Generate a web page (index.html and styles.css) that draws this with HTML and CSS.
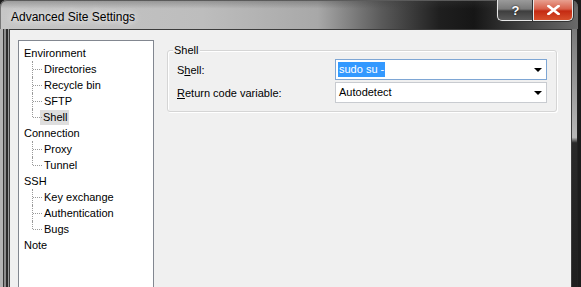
FILE: index.html
```html
<!DOCTYPE html>
<html lang="en">
<head>
	<link rel="stylesheet" href="styles.css">
	<meta charset="UTF-8">
	<title>Advanced Site Settings</title>
</head>
<body>
	<div class="window">
		<div class="titlebar">
			<span class="title">Advanced Site Settings</span>
			<div class="caption">
				<div class="btn help">?</div>
				<div class="btn close">
					<svg width="13" height="10" viewBox="0 0 13 10"><path d="M1.5 1 L11.5 9 M11.5 1 L1.5 9" stroke="#fff" stroke-width="2.6" stroke-linecap="square"/></svg>
				</div>
			</div>
		</div>
		<div class="body">
			<div class="client">
				<ul class="tree">
					<li>Environment
						<ul class="branch">
							<li>Directories</li>
							<li>Recycle bin</li>
							<li>SFTP</li>
							<li><span class="sel">Shell</span></li>
						</ul>
					</li>
					<li>Connection
						<ul class="branch">
							<li>Proxy</li>
							<li>Tunnel</li>
						</ul>
					</li>
					<li>SSH
						<ul class="branch">
							<li>Key exchange</li>
							<li>Authentication</li>
							<li>Bugs</li>
						</ul>
					</li>
					<li>Note</li>
				</ul>
				<div class="page">
					<div class="group">
						<div class="legend">Shell</div>
						<div class="row">
							<label>S<u>h</u>ell:</label>
							<div class="combo focus"><span class="hl">sudo su -</span><i class="arrow"></i></div>
						</div>
						<div class="row">
							<label><u>R</u>eturn code variable:</label>
							<div class="combo"><span>Autodetect</span><i class="arrow"></i></div>
						</div>
					</div>
				</div>
			</div>
			<div class="edge"></div>
		</div>
	</div>
</body>
</html>
```

FILE: styles.css
```css
html, body {
	margin: 0;
	padding: 0;
	width: 581px;
	height: 287px;
	overflow: hidden;
	background: #1c1c1c;
	font-family: "Liberation Sans", Arial, sans-serif;
	font-size: 11px;
	color: #000;
}
.window {
	width: 578px;
	height: 300px;
	display: flex;
	flex-direction: column;
	border-radius: 7px 7px 0 0;
	background-image: linear-gradient(to right, #c6c6c6 0%, #bdbdbd 35%, #a8a8a8 55%, #5a5a5a 66%, #1f1f1f 76%, #161616 82%, #3e3e3e 90%, #6a6a6a 100%);
	box-shadow: inset 0 1px 0 #6a6a6a, inset 1px 0 0 #777;
}
.titlebar {
	height: 31px;
	display: flex;
	align-items: flex-start;
	background: linear-gradient(to bottom, rgba(60,60,60,.35) 0%, rgba(255,255,255,0) 30%, rgba(255,255,255,0) 100%);
	border-radius: 7px 7px 0 0;
}
.title {
	padding: 10px 0 0 11px;
	font-size: 12px;
	line-height: 14px;
	text-shadow: 0 0 5px #eee, 0 0 9px #eee;
}
.caption {
	margin-left: auto;
	margin-right: 5px;
	display: flex;
}
.btn {
	height: 20px;
	border: 1px solid #e8e8e8;
	border-top: 0;
	display: flex;
	align-items: center;
	justify-content: center;
	box-shadow: 0 0 0 1px #333;
}
.help {
	width: 35px;
	border-radius: 0 0 0 5px;
	border-right: 0;
	background: linear-gradient(to bottom, #9a9a9a 0%, #7a7a7a 45%, #3e3e3e 55%, #5a5a5a 100%);
	color: #fff;
	font-weight: bold;
	font-size: 13px;
	text-shadow: 0 0 2px #000;
}
.close {
	width: 38px;
	border-radius: 0 0 5px 0;
	background: linear-gradient(to bottom, #e8a090 0%, #d8604a 45%, #c42a12 55%, #d8502c 100%);
}
.body {
	flex: 1;
	display: flex;
	background-image: linear-gradient(to right, #b4b4b4 0 3px, #343434 3px 4px, #8c8c8c 4px 6px, #2a2a2a 6px 8px, #9a9a9a 8px 9px, transparent 9px);
}
.client {
	margin-left: 9px;
	width: 563px;
	box-sizing: border-box;
	background: #f0f0f0;
	border: 1px solid #3c3c3c;
	border-bottom: 0;
	padding: 10px 0 0 8px;
	display: flex;
	align-items: flex-start;
	gap: 13px;
}
.edge {
	width: 6px;
	background: linear-gradient(to bottom, #7a7a7a 0%, #b8b8b8 40%, #2a2a2a 42%, #1e1e1e 100%);
	box-shadow: inset -1px 0 0 #222;
}
.tree {
	list-style: none;
	margin: 0;
	width: 136px;
	height: 260px;
	box-sizing: border-box;
	border: 1px solid #828790;
	background: #fff;
	padding: 4px 0 0 5px;
}
.tree li {
	line-height: 16px;
}
.branch {
	list-style: none;
	margin: 0;
	padding: 0;
}
.branch li {
	position: relative;
	padding-left: 20px;
}
.branch li::before {
	content: '';
	position: absolute;
	left: 8px;
	top: 0;
	height: 100%;
	border-left: 1px dotted #9a9a9a;
}
.branch li:last-child::before {
	height: 8px;
}
.branch li::after {
	content: '';
	position: absolute;
	left: 9px;
	top: 8px;
	width: 9px;
	border-top: 1px dotted #9a9a9a;
}
.sel {
	display: inline-block;
	line-height: 15px;
	padding: 0 2px 0 3px;
	margin-left: -4px;
	background: #dedede;
}
.page {
	flex: 1;
}
.group {
	margin-top: 10px;
	width: 390px;
	box-sizing: border-box;
	border: 1px solid #d5d5d5;
	border-radius: 3px;
	box-shadow: inset 1px 1px 0 #fff, 1px 1px 0 #fff;
	padding: 0 9px 8px 9px;
}
.legend {
	width: fit-content;
	margin: -7px 0 0 -4px;
	padding: 0 2px 0 1px;
	line-height: 13px;
	background: #f0f0f0;
}
.row {
	display: flex;
	align-items: center;
	margin-top: 2px;
}
.row label {
	width: 158px;
}
.combo {
	flex: 1;
	height: 21px;
	box-sizing: border-box;
	border: 1px solid #c8cbd0;
	background: #fff;
	display: flex;
	align-items: center;
	padding-left: 2px;
}
.combo.focus {
	border-color: #7ea6d4;
}
.combo span {
	line-height: 15px;
	padding: 0 1px;
}
.hl {
	background: #3399ff;
	color: #fff;
}
.arrow {
	margin-left: auto;
	margin-right: 4px;
	width: 0;
	height: 0;
	border-left: 4px solid transparent;
	border-right: 4px solid transparent;
	border-top: 4px solid #000;
}
```
